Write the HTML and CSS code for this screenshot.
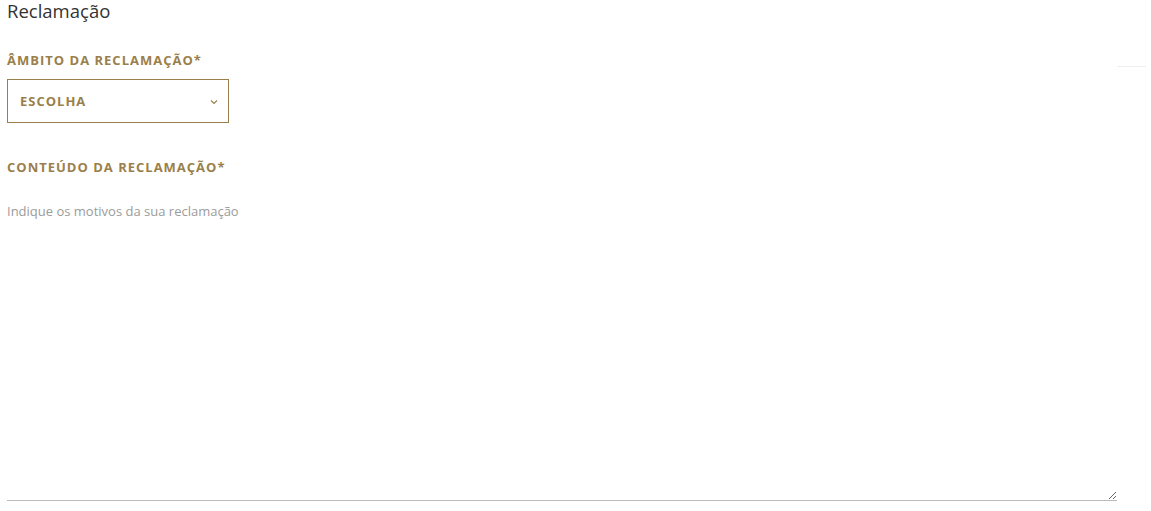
FILE: index.html
```html
<!DOCTYPE html>
<html lang="pt">
<head>
  <meta charset="UTF-8">
  <title>Reclamação</title>
  <link rel="stylesheet" href="styles.css">
</head>
<body>
  <div class="page">
    <form class="complaint">
      <h2 class="title">Reclamação</h2>

      <label class="field-label" for="scope">Âmbito da reclamação*</label>
      <div class="select-wrap">
        <select id="scope" class="select">
          <option>Escolha</option>
        </select>
        <svg class="chevron" width="8" height="6" viewBox="0 0 8 6"><path d="M1 1.5 L4 4.5 L7 1.5" fill="none" stroke="#9a7f4a" stroke-width="1.2"/></svg>
      </div>

      <label class="field-label content-label" for="content">Conteúdo da reclamação*</label>
      <textarea id="content" class="textarea" placeholder="Indique os motivos da sua reclamação"></textarea>
    </form>
    <aside class="side">
      <div class="side-rule"></div>
    </aside>
  </div>
</body>
</html>
```

FILE: styles.css
```css
* {
  box-sizing: border-box;
}

body {
  margin: 0;
  font-family: 'Open Sans', 'Liberation Sans', sans-serif;
  color: #333;
  background: #fff;
}

.page {
  display: flex;
  padding-left: 7px;
}

.complaint {
  width: 1110px;
  display: flex;
  flex-direction: column;
  align-items: flex-start;
}

.title {
  margin: 0;
  font-size: 18.5px;
  font-weight: 500;
  line-height: 22px;
  color: #333;
}

.field-label {
  margin-top: 30px;
  font-size: 13px;
  font-weight: 700;
  letter-spacing: 1px;
  text-transform: uppercase;
  color: #9a7f4a;
  line-height: 16px;
}

.select-wrap {
  position: relative;
  margin-top: 11px;
}

.select {
  appearance: none;
  -webkit-appearance: none;
  width: 222px;
  height: 44px;
  padding: 0 12px;
  border: 1px solid #9a7f4a;
  border-radius: 0;
  background: #fff;
  font-family: inherit;
  font-size: 13px;
  font-weight: 700;
  letter-spacing: 1px;
  text-transform: uppercase;
  color: #9a7f4a;
  outline: none;
}

.chevron {
  position: absolute;
  right: 11px;
  top: 20px;
  pointer-events: none;
}

.content-label {
  margin-top: 36px;
}

.textarea {
  width: 1110px;
  height: 309px;
  margin-top: 17px;
  padding: 10px 0 0;
  border: none;
  border-bottom: 1px solid #bbb;
  font-family: inherit;
  font-size: 13px;
  color: #555;
  outline: none;
  resize: vertical;
}

.textarea::placeholder {
  color: #9b9b9b;
}

.side {
  flex: 1;
  padding-top: 66px;
}

.side-rule {
  width: 29px;
  height: 1px;
  background: #eee;
}
```
